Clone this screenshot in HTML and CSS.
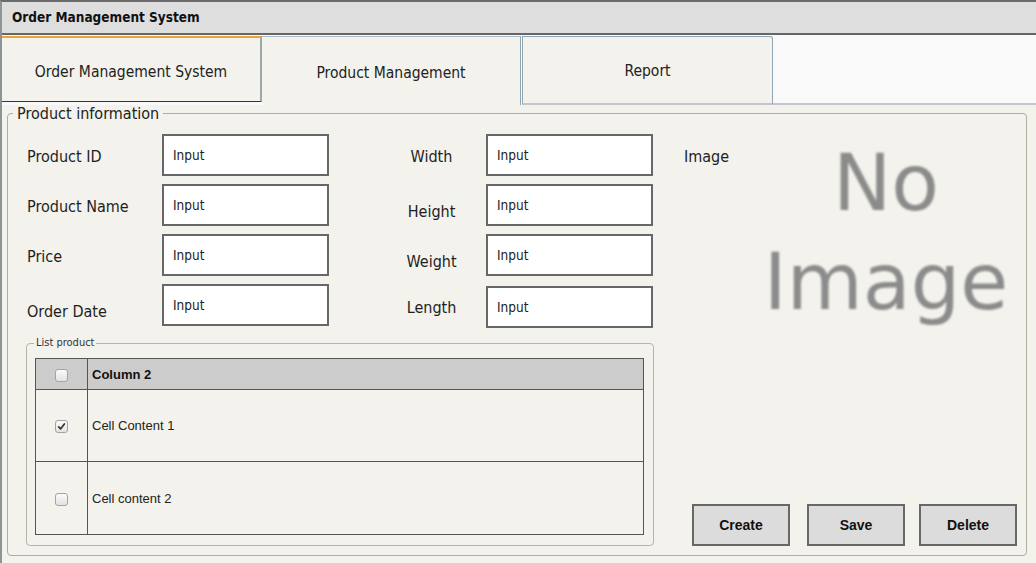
FILE: index.html
```html
<!DOCTYPE html>
<html lang="en">
<head>
<meta charset="utf-8">
<title>Order Management System</title>
<link rel="stylesheet" href="styles.css">
</head>
<body>
<div class="window">
  <div class="titlebar">Order Management System</div>
  <div class="tabs">
    <div class="tab tab-hover"><span>Order Management System</span></div>
    <div class="tab tab-active"><span>Product Management</span></div>
    <div class="tab tab-plain"><span>Report</span></div>
    <div class="tab-fill"></div>
  </div>
  <div class="content">
    <fieldset class="group">
      <legend class="group-legend">Product information</legend>
      <div class="group-body">
        <div class="left">
          <div class="form">
            <label class="lbl">Product ID</label>
            <div class="input">Input</div>
            <label class="lbl lbl2">Width</label>
            <div class="input">Input</div>

            <label class="lbl">Product Name</label>
            <div class="input">Input</div>
            <label class="lbl lbl2 low">Height</label>
            <div class="input">Input</div>

            <label class="lbl">Price</label>
            <div class="input">Input</div>
            <label class="lbl lbl2 low">Weight</label>
            <div class="input">Input</div>

            <label class="lbl lower">Order Date</label>
            <div class="input top">Input</div>
            <label class="lbl lbl2">Length</label>
            <div class="input bottom">Input</div>
          </div>

          <fieldset class="list">
            <legend class="list-legend">List product</legend>
            <table class="grid">
              <thead>
                <tr>
                  <th class="chk-col"><span class="chk"></span></th>
                  <th class="txt-col">Column 2</th>
                </tr>
              </thead>
              <tbody>
                <tr class="row1">
                  <td class="chk-col"><span class="chk checked"><svg viewBox="0 0 13 13" width="13" height="13"><path d="M3.6 6.8 L5.5 8.9 L9.4 3.9" fill="none" stroke="#333" stroke-width="1.7" stroke-linecap="round" stroke-linejoin="round"/></svg></span></td>
                  <td class="txt-col">Cell Content 1</td>
                </tr>
                <tr class="row2">
                  <td class="chk-col"><span class="chk"></span></td>
                  <td class="txt-col">Cell content 2</td>
                </tr>
              </tbody>
            </table>
          </fieldset>
        </div>

        <div class="right">
          <div class="image-row">
            <span class="image-label">Image</span>
            <div class="noimg">No<br>Image</div>
          </div>
          <div class="buttons">
            <button class="btn btn-create">Create</button>
            <button class="btn btn-save">Save</button>
            <button class="btn">Delete</button>
          </div>
        </div>
      </div>
    </fieldset>
  </div>
</div>
</body>
</html>
```

FILE: styles.css
```css
html, body {
  margin: 0;
  padding: 0;
  height: 100%;
}

body {
  background: #f3f2ec;
  font-family: "DejaVu Sans Condensed", "DejaVu Sans", sans-serif;
  font-stretch: condensed;
  color: #222;
  overflow: hidden;
}

.window {
  border-top: 2px solid #6a6a6a;
  border-left: 2px solid #8e9393;
  height: 563px;
  box-sizing: border-box;
}

.titlebar {
  height: 31px;
  line-height: 31px;
  background: #dedede;
  border-bottom: 2px solid #666;
  padding-left: 10px;
  font-weight: bold;
  font-size: 13.5px;
  color: #111;
}

/* Tabs */
.tabs {
  display: flex;
  align-items: flex-start;
  height: 70px;
  padding-top: 1px;
  box-sizing: border-box;
  background: #f9f9f9;
}

.tab {
  display: flex;
  align-items: center;
  justify-content: center;
  box-sizing: border-box;
  background: #f3f2ec;
  font-size: 15.5px;
  color: #222;
}

.tab-hover {
  width: 260px;
  height: 66px;
  border-top: 2px solid #eea23a;
  border-bottom: 1px solid #22307c;
  border-right: 2px solid #9aa8b0;
  padding-top: 5px;
}

.tab-active {
  width: 259px;
  height: 69px;
  border-top: 1px solid #a9b9c5;
  border-right: 1px solid #8fa5b3;
  padding-top: 4px;
}

.tab-plain {
  width: 251px;
  height: 69px;
  border-top: 1px solid #8fa5b3;
  border-right: 1px solid #8fa5b3;
  border-left: 1px solid #8fa5b3;
  border-bottom: 2px solid #c3c7c9;
  border-top-right-radius: 3px;
  margin-left: 1px;
  padding-top: 2px;
}

.tab-fill {
  flex: 1;
  height: 69px;
  box-sizing: border-box;
  border-bottom: 2px solid #c3c7c9;
}

/* Content */
.content {
  padding: 0 9px 0 5px;
}

.group {
  margin: 0;
  padding: 0 9px 9px 18px;
  border: 1px solid #aeae9f;
  border-radius: 4px;
  min-width: 0;
}

.group-legend {
  font-size: 16px;
  line-height: 17px;
  padding: 0 4px;
  margin-left: -13px;
  color: #222;
}

.group-body {
  display: flex;
  gap: 30px;
  padding-top: 12px;
}

.left {
  width: 628px;
  flex: none;
}

.form {
  display: grid;
  grid-template-columns: 136px 167px 157px 167px;
  grid-template-rows: 42px 42px 42px 44px;
  row-gap: 8px;
  align-items: center;
}

.lbl {
  font-size: 16px;
  padding-left: 1px;
  padding-top: 2px;
  color: #1e1e1e;
}

.lbl2 {
  justify-self: center;
  padding-left: 48px;
}

.lbl.low {
  padding-top: 12px;
}

.lbl.lower {
  padding-top: 12px;
  align-self: start;
  margin-top: 6px;
}

.input {
  height: 42px;
  box-sizing: border-box;
  border: 2px solid #676767;
  background: #fff;
  font-size: 13.5px;
  line-height: 38px;
  padding-left: 9px;
  color: #222;
}

.input.top {
  align-self: start;
}

.input.bottom {
  align-self: end;
}

/* List product */
.list {
  margin: 8px 0 0 0;
  padding: 0 9px 10px 8px;
  border: 1px solid #b4b4a8;
  border-radius: 4px;
  min-width: 0;
}

.list-legend {
  font-size: 11px;
  line-height: 14px;
  padding: 0 2px;
  margin-left: -1px;
  color: #333;
}

.grid {
  width: 100%;
  margin-top: 8px;
  border-collapse: collapse;
  font-family: "Liberation Sans", Arial, sans-serif;
  font-stretch: normal;
  font-size: 13px;
  color: #222;
}

.grid th,
.grid td {
  border: 1px solid #555;
  padding: 0;
}

.grid thead tr {
  height: 31px;
  background: #cccccc;
}

.grid th {
  text-align: left;
  font-weight: bold;
  color: #111;
}

.grid .chk-col {
  width: 51px;
  text-align: center;
  vertical-align: middle;
}

.row1 {
  height: 72px;
}

.row2 {
  height: 73px;
}

.grid .txt-col {
  padding-left: 4px;
  vertical-align: middle;
}

.chk {
  display: inline-block;
  width: 13px;
  height: 13px;
  box-sizing: border-box;
  border: 1px solid #a3a3a3;
  border-radius: 3px;
  background: linear-gradient(#fbfbfb, #e2e2e2);
  vertical-align: middle;
  position: relative;
}

.chk svg {
  position: absolute;
  left: -1px;
  top: -1px;
}

/* Right side */
.right {
  flex: 1;
  display: flex;
  flex-direction: column;
  justify-content: space-between;
}

.image-row {
  display: flex;
}

.image-label {
  width: 71px;
  flex: none;
  font-size: 16px;
  line-height: 46px;
  color: #1e1e1e;
}

.noimg {
  flex: 1;
  text-align: center;
  font-family: "DejaVu Sans", sans-serif;
  font-stretch: normal;
  font-size: 78px;
  line-height: 99px;
  color: #8b8b8b;
  filter: blur(1.2px);
}

.buttons {
  display: flex;
  justify-content: flex-end;
  gap: 14px;
}

.btn-create {
  margin-right: 3px;
}

.btn {
  width: 98px;
  height: 42px;
  box-sizing: border-box;
  border: 2px solid #676767;
  border-radius: 0;
  background: #dcdcdc;
  font-family: "Liberation Sans", Arial, sans-serif;
  font-weight: bold;
  font-size: 14px;
  color: #111;
  padding: 0;
}
```
